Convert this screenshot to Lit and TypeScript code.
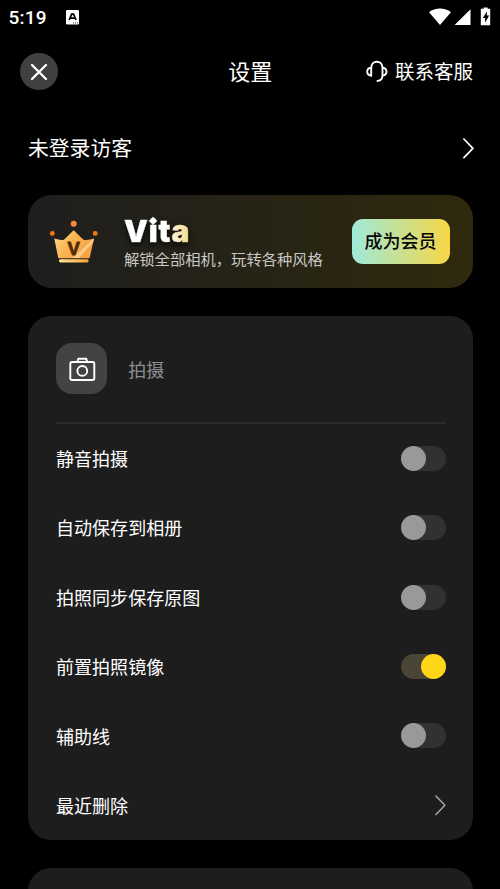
import { LitElement, html, css, svg } from "lit";
import { customElement, property } from "lit/decorators.js";
import { classMap } from "lit/directives/class-map.js";

@customElement("toggle-switch")
class ToggleSwitch extends LitElement {
  @property({ type: Boolean }) on = false;

  static styles = css`
    :host { display: block; }
    .track {
      display: flex;
      width: 44.5px;
      height: 25px;
      border-radius: 13px;
      background: #313131;
    }
    .track.on { background: #4a4535; justify-content: flex-end; }
    .knob { width: 25px; height: 25px; border-radius: 50%; background: #999; }
    .on .knob { background: #ffd517; }
  `;

  render() {
    return html`<div class=${classMap({ track: true, on: this.on })} role="switch" aria-checked=${this.on}>
      <div class="knob"></div>
    </div>`;
  }
}

interface Setting {
  label: string;
  kind: "toggle" | "link";
  on?: boolean;
}

const SETTINGS: Setting[] = [
  { label: "静音拍摄", kind: "toggle" },
  { label: "自动保存到相册", kind: "toggle" },
  { label: "拍照同步保存原图", kind: "toggle" },
  { label: "前置拍照镜像", kind: "toggle", on: true },
  { label: "辅助线", kind: "toggle" },
  { label: "最近删除", kind: "link" },
];

const chevron = (color: string, width: number) => html`
  <svg width="12" height="22" viewBox="0 0 12 22" fill="none">
    ${svg`<path d="M1.900 2 10.900 11.300 1.900 20.600" stroke=${color} stroke-width=${width} stroke-linecap="round" stroke-linejoin="round"/>`}
  </svg>
`;

@customElement("app-root")
class AppRoot extends LitElement {
  static styles = css`
    :host {
      display: block;
      height: 889px;
      overflow: hidden;
      background: #000;
      color: #fff;
      font-family: "Noto Sans CJK SC", sans-serif;
    }
    * { box-sizing: border-box; }
    svg { display: block; flex: none; }
    .status {
      display: flex;
      align-items: center;
      height: 34px;
      padding: 0 8px 0 8.5px;
    }
    .time { font: 500 19px/34px Roboto, sans-serif; letter-spacing: 0.2px; width: 57px; padding-top: 1px; }
    .status-icons { margin-left: auto; }
    .header {
      display: grid;
      grid-template-columns: 1fr auto 1fr;
      align-items: center;
      height: 75px;
      padding: 0 27px 0 20px;
    }
    .header > :first-child { justify-self: start; }
    .close {
      display: grid;
      place-items: center;
      width: 37.5px;
      height: 37.5px;
      border-radius: 50%;
      background: #404040;
    }
    .title { font-size: 22px; line-height: 30px; margin: 0 0 3px 7.5px; }
    .support {
      display: flex;
      align-items: center;
      justify-self: end;
      gap: 6px;
      font-size: 19.5px;
      line-height: 28px;
      white-space: nowrap;
    }
    .support span { margin-bottom: 1px; }
    .account {
      display: flex;
      align-items: center;
      justify-content: space-between;
      height: 77px;
      padding: 0 26px 0 28px;
      font-size: 20.8px;
    }
    .account span { margin-bottom: 2px; }
    .vip {
      display: flex;
      align-items: center;
      height: 93px;
      margin: 8.5px 27px 0 28px;
      padding: 0 23.5px 0 21px;
      border-radius: 24px;
      background: linear-gradient(90deg, #1e1e1e, #2f290d);
    }
    .vip-copy { margin-left: 25px; height: 93px; padding-top: 19px; }
    .brand {
      position: relative;
      width: 76px;
      height: 33px;
      font: 900 30px/34px Inter, sans-serif;
      filter: drop-shadow(0 3px 3px #000c);
    }
    .brand-text {
      background: linear-gradient(90deg, #fff 60%, #f4dc8c 100%);
      -webkit-background-clip: text;
      background-clip: text;
      color: transparent;
      letter-spacing: 0.9px;
      -webkit-text-stroke: 0.5px transparent;
    }
    .sparkle { position: absolute; left: 23.8px; top: 2.5px; }
    .tagline { font-size: 15.3px; line-height: 22px; color: #c8c8c5; white-space: nowrap; }
    .join {
      margin-left: auto;
      width: 98px;
      height: 45px;
      border-radius: 11px;
      background: linear-gradient(90deg, #9eeadb, #f7d645);
      color: #080808;
      font-size: 18px;
      font-weight: 500;
      line-height: 43px;
      text-align: center;
    }
    .card {
      margin: 28px 27px 0 28px;
      padding: 0 27.5px 0 28px;
      border-radius: 23px;
      background: #1d1d1d;
    }
    .card-head {
      display: flex;
      align-items: center;
      height: 108px;
      border-bottom: 2px solid #2c2c2c;
      gap: 21px;
      color: #8e8e8e;
      font-size: 18px;
    }
    .tile {
      display: grid;
      place-items: center;
      width: 51.3px;
      height: 51.5px;
      border-radius: 16px;
      background: #434343;
    }
    .row {
      display: flex;
      align-items: center;
      justify-content: space-between;
      height: 69.45px;
      font-size: 18.05px;
    }
    .row span { margin-bottom: 0.6px; }
    .next { height: 120px; }
  `;

  render() {
    return html`
      <div class="status">
        <div class="time">5:19</div>
        <svg width="13" height="15" viewBox="0 0 13 15">
          <rect width="13" height="14.5" rx="1.2" fill="#fff" />
          <path d="M3.1 10 5.7 4.2h1.8L10 10M4.3 8.2h4.5" fill="none" stroke="#000" stroke-width="1.7" />
          <path d="M7 12.9h1M9 12.9h1M11 12.9h1" stroke="#444" />
        </svg>
        <svg class="status-icons" width="64" height="20" viewBox="0 0 64 20" fill="#fff">
          <path d="M1.1 5.3C7.1.3 16.900.3 22.900 5.300L12 18Z" />
          <path d="M42.500 2.200V18H26.600Z" />
          <path d="M55.600.4h4v1.400h2.600V18.200h-9.400V1.800h2.800Z" />
          <path d="M58.900 4.500 54.800 10.900h2.300v4.900l4-7.200h-2.200Z" fill="#000" />
        </svg>
      </div>

      <div class="header">
        <div class="close">
          <svg width="18" height="18" viewBox="0 0 18 18">
            <path d="M2 2 16 16M16 2 2 16" stroke="#fff" stroke-width="2.300" stroke-linecap="round" />
          </svg>
        </div>
        <div class="title">设置</div>
        <div class="support">
          <svg width="24" height="24" viewBox="0 0 24 24" fill="none" stroke="#fff" stroke-width="1.900" stroke-linecap="round">
            <path d="M6.200 15.800V8C6.200 4.200 8.700 1.700 11.900 1.700S17.500 4.200 17.500 8v7.600c0 3.200-2.100 5.100-5 5.400" />
            <path d="M6 7.700C3.700 8 2.200 9.500 2.200 11.600s1.500 3.700 3.800 4M17.700 7.700c2.300.3 3.800 1.800 3.800 3.900s-1.500 3.700-3.800 4" />
          </svg>
          <span>联系客服</span>
        </div>
      </div>

      <div class="account"><span>未登录访客</span>${chevron("#fff", 1.7)}</div>

      <div class="vip">
        <svg width="50" height="46" viewBox="0 0 50 46">
          <defs>
            <linearGradient id="gold" x1="0" y1="0" x2="1" y2=".5">
              <stop offset="0" stop-color="#ffdc9a" />
              <stop offset=".5" stop-color="#fcb650" />
              <stop offset="1" stop-color="#f5a345" />
            </linearGradient>
            <linearGradient id="bar"><stop stop-color="#ffe6a0" /><stop offset="1" stop-color="#f6a72d" /></linearGradient>
            <clipPath id="crown"><path d="M5 20.500 15.500 21.500 24.600 12.500 34 21.500 45 20.500 40.600 40H9.300Z" /></clipPath>
          </defs>
          <circle cx="24.700" cy="5.800" r="3" fill="#f58a37" />
          <circle cx="3.300" cy="15.400" r="2.400" fill="#f47b0c" />
          <circle cx="46.200" cy="15.400" r="2.400" fill="#f47b0c" />
          <path d="M5.300 20.500Q11 22.500 15 21.700L24.600 12.200 34.500 21.700Q39 22.500 45 20.500L40.800 39.300q-.2.900-1.200.900H10.300q-1 0-1.200-.9Z" fill="url(#gold)" />
          <path d="M30 40 46 22V19L24 40Z" fill="#ffe3b5" opacity=".6" clip-path="url(#crown)" />
          <rect x="10" y="41.300" width="29.600" height="3.200" rx="1.400" fill="url(#bar)" />
          <text x="24.700" y="36.500" text-anchor="middle" font-family="Liberation Sans, sans-serif" font-size="18.500" font-weight="700" fill="#512c08" stroke="#5a2e08" stroke-width=".9">V</text>
        </svg>
        <div class="vip-copy">
          <div class="brand">
            <span class="brand-text">Vita</span>
            <svg class="sparkle" width="10" height="10" viewBox="0 0 10 10">
              <path d="M5 .500 6.800 3.200 9.500 5 6.800 6.800 5 9.500 3.200 6.800.500 5 3.200 3.200Z" fill="#fff" />
            </svg>
          </div>
          <div class="tagline">解锁全部相机，玩转各种风格</div>
        </div>
        <div class="join">成为会员</div>
      </div>

      <div class="card">
        <div class="card-head">
          <div class="tile">
            <svg width="28" height="26" viewBox="0 0 28 26" fill="none" stroke="#fff" stroke-width="1.900" stroke-linejoin="round">
              <rect x="2.300" y="6" width="24" height="18" rx="1.800" />
              <path d="M9.500 5.800 10.300 2.700h8l.8 3.100" />
              <circle cx="14.300" cy="14.900" r="4.900" />
            </svg>
          </div>
          <span>拍摄</span>
        </div>
        ${SETTINGS.map(
          (s) => html`<div class="row">
            <span>${s.label}</span>
            ${s.kind === "toggle"
              ? html`<toggle-switch ?on=${!!s.on}></toggle-switch>`
              : chevron("#aaa", 1.4)}
          </div>`
        )}
      </div>
      <div class="card next"></div>
    `;
  }
}
